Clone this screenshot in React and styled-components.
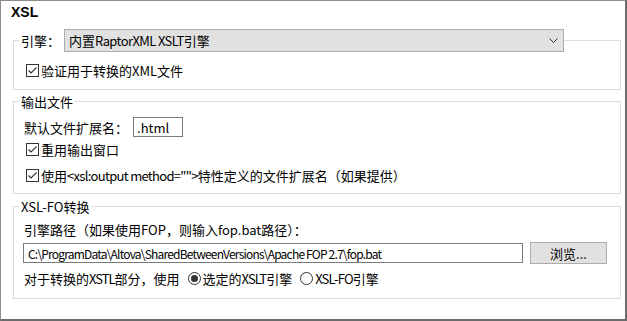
import React from 'react'
import styled, { createGlobalStyle } from 'styled-components'

const GlobalStyle = createGlobalStyle`
  html, body {
    margin: 0;
    padding: 0;
    background: #ffffff;
  }
  body {
    font-family: "Noto Sans CJK SC", "Noto Sans", sans-serif;
    font-size: 13px;
    color: #000000;
  }
`

const Frame = styled.div`
  box-sizing: border-box;
  width: 627px;
  height: 321px;
  border-top: 1px solid #8c8c8c;
  border-left: 1px solid #8c8c8c;
  border-right: 2px solid #6b6b6b;
  border-bottom: 2px solid #6b6b6b;
  padding: 0 4px 0 12px;
  display: flex;
  flex-direction: column;
`

const Title = styled.div`
  height: 28px;
  box-sizing: border-box;
  padding-top: 2px;
  margin-left: -2px;
  font-family: "Liberation Sans", sans-serif;
  font-weight: bold;
  font-size: 14px;
  line-height: 18px;
`

const Group = styled.fieldset`
  margin: ${p => p.$top || 0}px 0 0 0;
  padding: 0;
  min-width: 0;
  border: 1px solid #dcdcdc;
`

const Legend = styled.legend`
  margin-left: 5px;
  padding: 0 ${p => (p.$flush ? 0 : 2)}px 0 2px;
  line-height: 19px;
`

const LegendRow = styled.div`
  display: flex;
  align-items: center;
  gap: 4px;
`

const Body = styled.div`
  padding: 0 10px ${p => p.$bottom || 0}px 10px;
  display: flex;
  flex-direction: column;
`

const Row = styled.div`
  display: flex;
  align-items: center;
  margin-top: ${p => p.$top || 0}px;
  height: ${p => p.$h || 17}px;
  gap: ${p => p.$gap || 0}px;
  line-height: 17px;
  white-space: nowrap;
`

/* Latin runs render a little narrower in the original dialog font */
const Lt = styled.span`
  letter-spacing: ${p => p.$ls ?? -0.6}px;
`

const Select = styled.div`
  box-sizing: border-box;
  width: 500px;
  height: 23px;
  background: #e1e1e1;
  border: 1px solid #adadad;
  display: flex;
  align-items: center;
  justify-content: space-between;
  padding: 0 5px 0 4px;
  line-height: 17px;
`

const TextBox = styled.div`
  box-sizing: border-box;
  width: ${p => p.$w}px;
  height: 20px;
  border: 1px solid #7a7a7a;
  background: #ffffff;
  display: flex;
  align-items: center;
  padding-left: ${p => p.$pad || 3}px;
  margin-left: ${p => p.$ml || 0}px;
  font-size: ${p => p.$fs || 13}px;
  letter-spacing: ${p => p.$ls || 0}px;
  line-height: 17px;
  overflow: hidden;
`

const Button = styled.div`
  box-sizing: border-box;
  width: 77px;
  height: 22px;
  background: #e1e1e1;
  border: 1px solid #adadad;
  display: flex;
  align-items: center;
  justify-content: center;
`

const Box = styled.span`
  box-sizing: border-box;
  width: 13px;
  height: 13px;
  border: 1px solid #333333;
  background: #ffffff;
  margin: 0 2px 0 2px;
  display: inline-flex;
  align-items: center;
  justify-content: center;
`

const Radio = styled.span`
  box-sizing: border-box;
  width: 13px;
  height: 13px;
  border: 1px solid #333333;
  border-radius: 50%;
  background: #ffffff;
  margin: 0 2px 0 ${p => p.$gap ?? 9}px;
  display: inline-flex;
  align-items: center;
  justify-content: center;
  &::after {
    content: '';
    width: 7px;
    height: 7px;
    border-radius: 50%;
    background: ${p => (p.$on ? '#333333' : 'transparent')};
  }
`

const Check = ({ children, top }) => (
  <Row $top={top}>
    <Box>
      <svg width="11" height="11" viewBox="0 0 11 11">
        <polyline points="1.5,5.5 4,8 9.5,2.5" fill="none" stroke="#333333" strokeWidth="1.1" />
      </svg>
    </Box>
    <span>{children}</span>
  </Row>
)

const Chevron = () => (
  <svg width="9" height="5" viewBox="0 0 9 5">
    <polyline points="0.5,0.5 4.5,4.5 8.5,0.5" fill="none" stroke="#333333" strokeWidth="1" />
  </svg>
)

const App = () => (
  <>
    <GlobalStyle />
    <Frame>
      <Title>XSL</Title>

      <Group>
        <Legend $flush>
          <LegendRow>
            <span>引擎：</span>
            <Select>
              <span>内置<Lt $ls={-0.6}>RaptorXML XSLT</Lt>引擎</span>
              <Chevron />
            </Select>
          </LegendRow>
        </Legend>
        <Body $bottom={10}>
          <Check top={10}>验证用于转换的XML文件</Check>
        </Body>
      </Group>

      <Group $top={2}>
        <Legend>输出文件</Legend>
        <Body $bottom={9}>
          <Row $top={6} $h={20} $gap={5}>
            <span>默认文件扩展名：</span>
            <TextBox $w={50}>.html</TextBox>
          </Row>
          <Check top={4}>重用输出窗口</Check>
          <Check top={9}>
            使用<Lt $ls={-0.7}>&lt;xsl:output method=""&gt;</Lt>特性定义的文件扩展名（如果提供）
          </Check>
        </Body>
      </Group>

      <Group $top={3}>
        <Legend>XSL-FO转换</Legend>
        <Body $bottom={11}>
          <Row $top={5}>引擎路径（如果使用FOP，则输入fop.bat路径）：</Row>
          <Row $top={4} $h={22} $gap={7}>
            <TextBox $w={500} $ml={-1} $pad={4} $fs={12} $ls={-0.8}>
              C:\ProgramData\Altova\SharedBetweenVersions\Apache FOP 2.7\fop.bat
            </TextBox>
            <Button>浏览...</Button>
          </Row>
          <Row $top={6}>
            <span>对于转换的<Lt $ls={-1}>XSTL</Lt>部分，使用</span>
            <Radio $on $gap={8} />
            <span>选定的<Lt $ls={-0.9}>XSLT</Lt>引擎</span>
            <Radio $gap={8} />
            <span><Lt $ls={-0.8}>XSL-FO</Lt>引擎</span>
          </Row>
        </Body>
      </Group>
    </Frame>
  </>
)

export default App
